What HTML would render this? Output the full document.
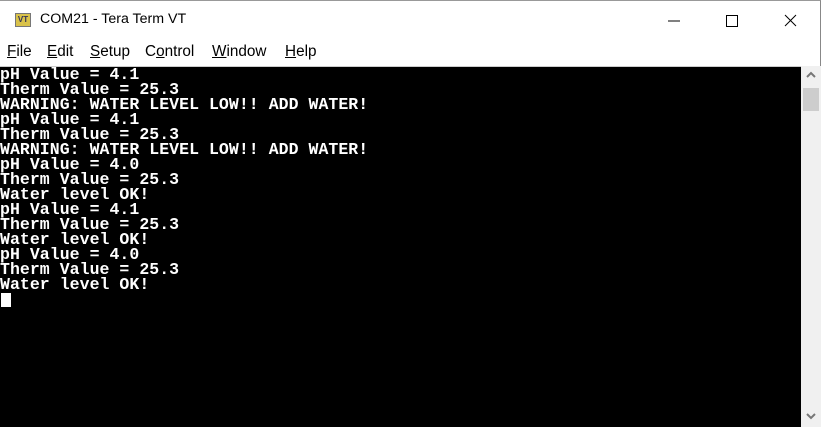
<!DOCTYPE html>
<html><head><style>
body{margin:0;width:822px;height:427px;overflow:hidden;background:#fff;font-family:"Liberation Sans",sans-serif;position:relative}
.frame{position:absolute;left:0;top:0;width:821px;height:427px;border-right:1px solid #888;border-top:1px solid #999;box-sizing:border-box}
.title{position:absolute;left:40px;top:11px;font-size:14.2px;color:#000}
.icon{position:absolute;left:15px;top:13px;width:16px;height:14px;background:#d9c24a;border:1px solid #777;box-sizing:border-box;font-size:8px;font-weight:bold;color:#335;text-align:center;line-height:11px}
.menu span{position:absolute;top:43px;font-size:15.3px;color:#000}
.term{position:absolute;left:0;top:66px;width:801px;height:361px;background:#000;border-top:1px solid #ccc;box-sizing:border-box}
pre{margin:0;position:absolute;left:0;top:0px;font-family:"Liberation Mono",monospace;font-weight:bold;font-size:16.5px;letter-spacing:0.05px;line-height:15px;color:#fff}
.cur{position:absolute;left:1px;top:226px;width:10px;height:14px;background:#fff}
.sb{position:absolute;left:801px;top:66px;width:20px;height:361px;background:#f0f0f0}
.thumb{position:absolute;left:2px;top:22px;width:16px;height:23px;background:#cdcdcd}
</style></head><body>
<div class="frame"></div>
<div class="icon">VT</div>
<div class="title">COM21 - Tera Term VT</div>
<svg style="position:absolute;left:660px;top:12px" width="150" height="20">
<line x1="8" y1="9" x2="20" y2="9" stroke="#000"/>
<rect x="66.5" y="3.5" width="11" height="11" fill="none" stroke="#000"/>
<path d="M125 3 L136 14 M136 3 L125 14" stroke="#000"/>
</svg>
<div class="menu"><span style="left:7px"><u>F</u>ile</span><span style="left:47px"><u>E</u>dit</span><span style="left:90px"><u>S</u>etup</span><span style="left:145px">C<u>o</u>ntrol</span><span style="left:212px"><u>W</u>indow</span><span style="left:285px"><u>H</u>elp</span></div>
<div class="term"><pre>pH Value = 4.1
Therm Value = 25.3
WARNING: WATER LEVEL LOW!! ADD WATER!
pH Value = 4.1
Therm Value = 25.3
WARNING: WATER LEVEL LOW!! ADD WATER!
pH Value = 4.0
Therm Value = 25.3
Water level OK!
pH Value = 4.1
Therm Value = 25.3
Water level OK!
pH Value = 4.0
Therm Value = 25.3
Water level OK!</pre><div class="cur"></div></div>
<div class="sb"><div class="thumb"></div>
<svg style="position:absolute;left:5px;top:5px" width="10" height="8"><path d="M1 6 L5 2 L9 6" stroke="#777" stroke-width="2" fill="none"/></svg>
<svg style="position:absolute;left:5px;top:346px" width="10" height="8"><path d="M1 2 L5 6 L9 2" stroke="#777" stroke-width="2" fill="none"/></svg>
</div>
</body></html>
